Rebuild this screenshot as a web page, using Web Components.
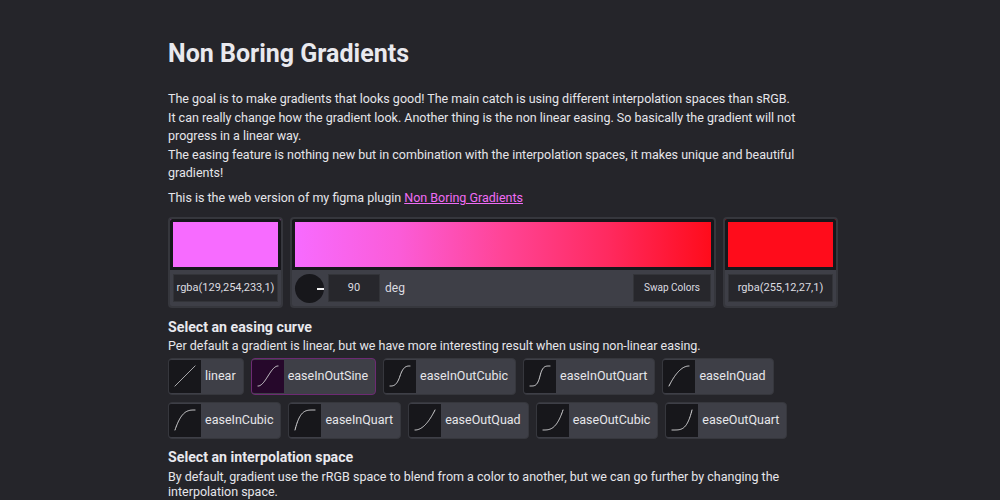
<!DOCTYPE html>
<html>
<head>
<meta charset="utf-8">
<title>Non Boring Gradients</title>
<style>
    html, body { margin: 0; height: 100%; overflow: hidden; background: #25252a; }
    body { font-family: Roboto, "Liberation Sans", sans-serif; color: #e6e6ea; }
    a { color: #f06cf5; }
</style>
</head>
<body>
<gradient-page>
    <h1 slot="title">Non Boring Gradients</h1>
    <span slot="intro">The goal is to make gradients that looks good! The main catch is using different interpolation spaces than sRGB.<br>It can really change how the gradient look. Another thing is the non linear easing. So basically the gradient will not progress in a linear way.<br>The easing feature is nothing new but in combination with the interpolation spaces, it makes unique and beautiful gradients!</span>
    <span slot="plugin">This is the web version of my figma plugin <a href="#">Non Boring Gradients</a></span>
    <gradient-editor slot="editor">
        <color-panel color="#f76bff" value="rgba(129,254,233,1)"></color-panel>
        <gradient-panel angle="90"></gradient-panel>
        <color-panel color="#ff0c1b" value="rgba(255,12,27,1)"></color-panel>
    </gradient-editor>
    <page-section slot="easing" heading="Select an easing curve">
        Per default a gradient is linear, but we have more interesting result when using non-linear easing.
        <div slot="content" class="curves">
            <curve-button>linear</curve-button>
            <curve-button selected>easeInOutSine</curve-button>
            <curve-button>easeInOutCubic</curve-button>
            <curve-button>easeInOutQuart</curve-button>
            <curve-button>easeInQuad</curve-button>
            <curve-button>easeInCubic</curve-button>
            <curve-button>easeInQuart</curve-button>
            <curve-button>easeOutQuad</curve-button>
            <curve-button>easeOutCubic</curve-button>
            <curve-button>easeOutQuart</curve-button>
        </div>
    </page-section>
    <page-section slot="space" heading="Select an interpolation space">
        By default, gradient use the rRGB space to blend from a color to another, but we can go further by changing the interpolation space.
    </page-section>
</gradient-page>

<script>
// Page layout
class GradientPage extends HTMLElement {
    constructor() {
        super();
        this.attachShadow({ mode: 'open' });
        this.shadowRoot.innerHTML = `
            <style>
                :host {
                    display: block;
                    width: 670px;
                    margin-left: 168px;
                    padding-top: 39px;
                    font-size: 12.5px;
                    line-height: 18.6px;
                }
                ::slotted(h1) {
                    margin: 0 0 21px;
                    font-size: 25px;
                    line-height: 30px;
                    font-weight: 700;
                    color: #e9e9ee;
                }
                .plugin { margin: 6px 0 9.4px; }
            </style>
            <slot name="title"></slot>
            <div><slot name="intro"></slot></div>
            <div class="plugin"><slot name="plugin"></slot></div>
            <slot name="editor"></slot>
            <slot name="easing"></slot>
            <slot name="space"></slot>
        `;
    }
}

// The three panels row
class GradientEditor extends HTMLElement {
    constructor() {
        super();
        this.attachShadow({ mode: 'open' });
        this.shadowRoot.innerHTML = `
            <style>
                :host {
                    display: grid;
                    grid-template-columns: 115px 1fr 115px;
                    gap: 7px;
                    height: 91px;
                    margin-bottom: 9.6px;
                }
            </style>
            <slot></slot>
        `;
    }
}

const panelStyle = `
    :host {
        display: flex;
        flex-direction: column;
        box-sizing: border-box;
        background: #3e3f47;
        border: 2px solid #36373d;
        border-radius: 4px;
        overflow: hidden;
    }
    .preview {
        box-sizing: border-box;
        height: 51px;
        border: 3px solid #17171b;
        flex: none;
    }
    .controls {
        flex: 1;
        display: flex;
        align-items: center;
        padding: 1px 3px 0;
        font-size: 11px;
    }
    .field {
        box-sizing: border-box;
        height: 28px;
        display: flex;
        align-items: center;
        justify-content: center;
        background: #27272c;
        border: 1px solid #333439;
        color: #dcdce0;
    }
`;

class ColorPanel extends HTMLElement {
    constructor() {
        super();
        this.attachShadow({ mode: 'open' });
    }

    connectedCallback() {
        const color = this.getAttribute('color');
        const value = this.getAttribute('value');
        this.shadowRoot.innerHTML = `
            <style>${panelStyle}
                .field { flex: 1; }
            </style>
            <div class="preview" style="background:${color}"></div>
            <div class="controls"><div class="field">${value}</div></div>
        `;
    }
}

class GradientPanel extends HTMLElement {
    constructor() {
        super();
        this.attachShadow({ mode: 'open' });
    }

    connectedCallback() {
        const angle = this.getAttribute('angle');
        this.shadowRoot.innerHTML = `
            <style>${panelStyle}
                .preview { background: linear-gradient(90deg, #f76bff, #fb5cd8 25%, #ff4496 50%, #ff2a60 75%, #ff0c1b); }
                .knob {
                    position: relative;
                    width: 29px;
                    height: 29px;
                    border-radius: 50%;
                    background: #17171b;
                    flex: none;
                    margin-right: 4px;
                }
                .knob::after {
                    content: '';
                    position: absolute;
                    left: 22px;
                    top: 14px;
                    width: 7px;
                    height: 2px;
                    background: #f2f2f2;
                }
                .angle { width: 52px; }
                .unit { margin-left: 5px; font-size: 12px; color: #dcdce0; }
                .swap { margin-left: auto; width: 78px; font-size: 10px; }
            </style>
            <div class="preview"></div>
            <div class="controls">
                <div class="knob"></div>
                <div class="field angle">${angle}</div>
                <span class="unit">deg</span>
                <div class="field swap">Swap Colors</div>
            </div>
        `;
    }
}

class PageSection extends HTMLElement {
    constructor() {
        super();
        this.attachShadow({ mode: 'open' });
    }

    connectedCallback() {
        this.shadowRoot.innerHTML = `
            <style>
                :host { display: block; }
                h2 {
                    margin: 0;
                    font-size: 14.2px;
                    line-height: 18px;
                    font-weight: 700;
                    color: #e9e9ee;
                }
                .text { margin-top: 2.5px; line-height: 15px; }
                .content { margin-top: 5px; margin-bottom: 9px; }
                ::slotted(.curves) {
                    display: flex;
                    flex-wrap: wrap;
                    gap: 7px;
                }
            </style>
            <h2>${this.getAttribute('heading')}</h2>
            <div class="text"><slot></slot></div>
            <div class="content"><slot name="content"></slot></div>
        `;
    }
}

// Note the demo names them the other way round: easeIn* rises fast, easeOut* starts flat
const EASINGS = {
    linear: x => x,
    easeInOutSine: x => (1 - Math.cos(Math.PI * x)) / 2,
    easeInOutCubic: x => x < 0.5 ? 4 * x ** 3 : 1 - (2 - 2 * x) ** 3 / 2,
    easeInOutQuart: x => x < 0.5 ? 8 * x ** 4 : 1 - (2 - 2 * x) ** 4 / 2,
    easeInQuad: x => 1 - (1 - x) ** 2,
    easeInCubic: x => 1 - (1 - x) ** 3,
    easeInQuart: x => 1 - (1 - x) ** 4,
    easeOutQuad: x => x ** 2,
    easeOutCubic: x => x ** 3,
    easeOutQuart: x => x ** 4
};

function curvePath(fn) {
    const points = [];
    for (let i = 0; i <= 40; i++) {
        const x = i / 40;
        points.push(`${(6 + x * 20).toFixed(2)} ${(26 - fn(x) * 20).toFixed(2)}`);
    }
    return 'M' + points.join('L');
}

// Easing curve button, the label picks the curve
class CurveButton extends HTMLElement {
    constructor() {
        super();
        this.attachShadow({ mode: 'open' });
    }

    connectedCallback() {
        const d = curvePath(EASINGS[this.textContent.trim()]);
        this.shadowRoot.innerHTML = `
            <style>
                :host {
                    display: flex;
                    align-items: center;
                    box-sizing: border-box;
                    height: 37px;
                    padding: 1px 7px 1px 0;
                    background: #3e3f47;
                    border: 1px solid #36373d;
                    border-radius: 4px;
                    font-size: 12.5px;
                    color: #e6e6ea;
                }
                :host([selected]) { border-color: #6d2a73; }
                .icon {
                    width: 32px;
                    height: 33px;
                    background: #17171b;
                    margin-right: 4px;
                    flex: none;
                    border-radius: 2px 0 0 2px;
                }
                :host([selected]) .icon { background: #26082b; }
                svg { display: block; }
                path { fill: none; stroke: #d8d8da; stroke-width: 1; stroke-linecap: round; stroke-linejoin: round; }
            </style>
            <div class="icon"><svg width="32" height="33" viewBox="0 0 32 33"><path d="${d}"/></svg></div>
            <slot></slot>
        `;
    }
}

customElements.define('gradient-page', GradientPage);
customElements.define('gradient-editor', GradientEditor);
customElements.define('color-panel', ColorPanel);
customElements.define('gradient-panel', GradientPanel);
customElements.define('page-section', PageSection);
customElements.define('curve-button', CurveButton);
</script>
</body>
</html>
